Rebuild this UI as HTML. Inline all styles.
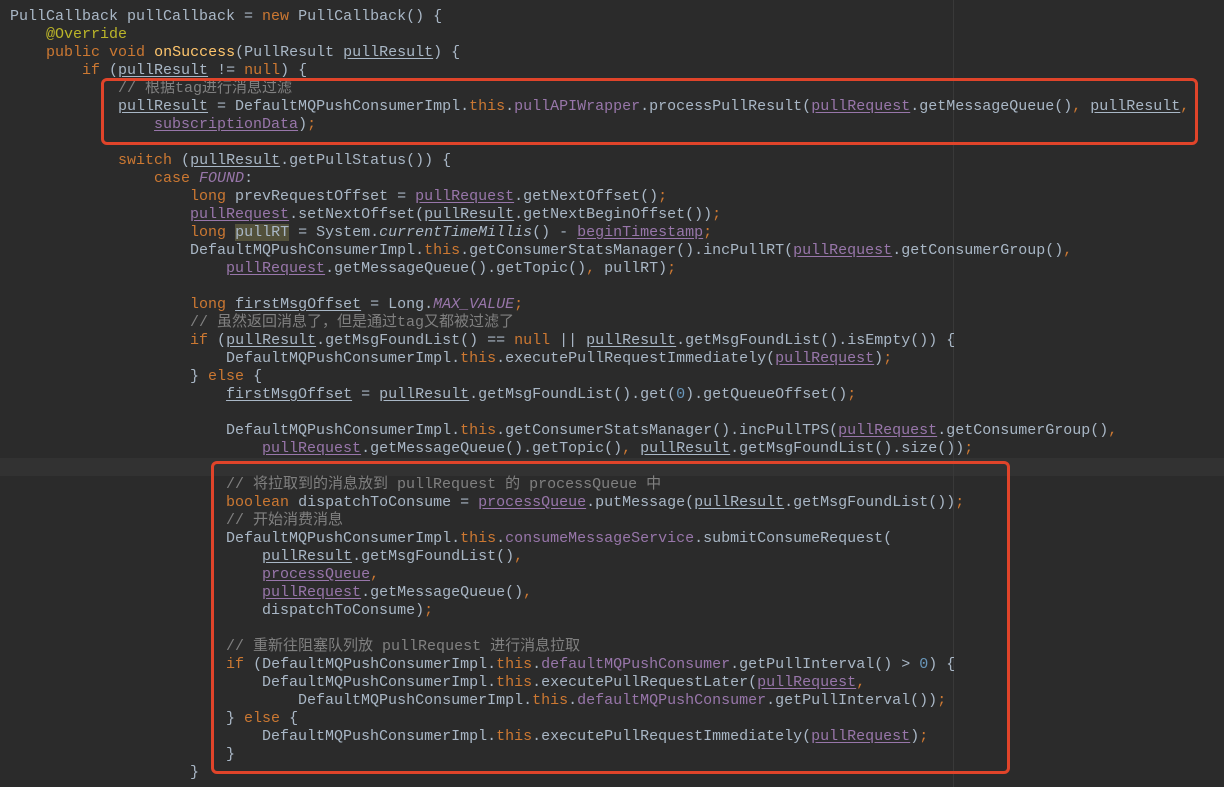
<!DOCTYPE html>
<html><head><meta charset="utf-8"><style>
html,body{margin:0;padding:0;background:#2b2b2b;width:1224px;height:787px;overflow:hidden;}
#code{position:absolute;left:10px;top:8px;font-family:"Liberation Mono","Noto Sans CJK SC",monospace;font-size:15px;color:#a9b7c6;}
.l{height:18px;line-height:18px;white-space:pre;}
.k{color:#cc7832}.f{color:#9876aa}.u{text-decoration:underline;text-underline-offset:2px}
.m{color:#ffc66d}.c{color:#808080}.i{font-style:italic}.n{color:#6897bb}.a{color:#bbb529}
.hl{background:#52503a}
.box{position:absolute;border:3px solid #e0442a;border-radius:6px;box-sizing:border-box;}
</style></head><body>
<div style="position:absolute;left:0;top:458px;width:1224px;height:18px;background:#323232"></div>
<div style="position:absolute;left:953px;top:0;width:1px;height:787px;background:#393939"></div>
<div id="code">
<div class="l">PullCallback pullCallback = <span class="k">new</span> PullCallback() {</div>
<div class="l">    <span class="a">@Override</span></div>
<div class="l">    <span class="k">public void</span> <span class="m">onSuccess</span>(PullResult <span class="u">pullResult</span>) {</div>
<div class="l">        <span class="k">if</span> (<span class="u">pullResult</span> != <span class="k">null</span>) {</div>
<div class="l">            <span class="c">// 根据tag进行消息过滤</span></div>
<div class="l">            <span class="u">pullResult</span> = DefaultMQPushConsumerImpl.<span class="k">this</span>.<span class="f">pullAPIWrapper</span>.processPullResult(<span class="f u">pullRequest</span>.getMessageQueue()<span class="k">,</span> <span class="u">pullResult</span><span class="k">,</span></div>
<div class="l">                <span class="f u">subscriptionData</span>)<span class="k">;</span></div>
<div class="l"> </div>
<div class="l">            <span class="k">switch</span> (<span class="u">pullResult</span>.getPullStatus()) {</div>
<div class="l">                <span class="k">case </span><span class="f i">FOUND</span>:</div>
<div class="l">                    <span class="k">long</span> prevRequestOffset = <span class="f u">pullRequest</span>.getNextOffset()<span class="k">;</span></div>
<div class="l">                    <span class="f u">pullRequest</span>.setNextOffset(<span class="u">pullResult</span>.getNextBeginOffset())<span class="k">;</span></div>
<div class="l">                    <span class="k">long</span> <span class="hl">pullRT</span> = System.<span class="i">currentTimeMillis</span>() - <span class="f u">beginTimestamp</span><span class="k">;</span></div>
<div class="l">                    DefaultMQPushConsumerImpl.<span class="k">this</span>.getConsumerStatsManager().incPullRT(<span class="f u">pullRequest</span>.getConsumerGroup()<span class="k">,</span></div>
<div class="l">                        <span class="f u">pullRequest</span>.getMessageQueue().getTopic()<span class="k">,</span> pullRT)<span class="k">;</span></div>
<div class="l"> </div>
<div class="l">                    <span class="k">long</span> <span class="u">firstMsgOffset</span> = Long.<span class="f i">MAX_VALUE</span><span class="k">;</span></div>
<div class="l">                    <span class="c">// 虽然返回消息了，但是通过tag又都被过滤了</span></div>
<div class="l">                    <span class="k">if</span> (<span class="u">pullResult</span>.getMsgFoundList() == <span class="k">null</span> || <span class="u">pullResult</span>.getMsgFoundList().isEmpty()) {</div>
<div class="l">                        DefaultMQPushConsumerImpl.<span class="k">this</span>.executePullRequestImmediately(<span class="f u">pullRequest</span>)<span class="k">;</span></div>
<div class="l">                    } <span class="k">else</span> {</div>
<div class="l">                        <span class="u">firstMsgOffset</span> = <span class="u">pullResult</span>.getMsgFoundList().get(<span class="n">0</span>).getQueueOffset()<span class="k">;</span></div>
<div class="l"> </div>
<div class="l">                        DefaultMQPushConsumerImpl.<span class="k">this</span>.getConsumerStatsManager().incPullTPS(<span class="f u">pullRequest</span>.getConsumerGroup()<span class="k">,</span></div>
<div class="l">                            <span class="f u">pullRequest</span>.getMessageQueue().getTopic()<span class="k">,</span> <span class="u">pullResult</span>.getMsgFoundList().size())<span class="k">;</span></div>
<div class="l"> </div>
<div class="l">                        <span class="c">// 将拉取到的消息放到 pullRequest 的 processQueue 中</span></div>
<div class="l">                        <span class="k">boolean</span> dispatchToConsume = <span class="f u">processQueue</span>.putMessage(<span class="u">pullResult</span>.getMsgFoundList())<span class="k">;</span></div>
<div class="l">                        <span class="c">// 开始消费消息</span></div>
<div class="l">                        DefaultMQPushConsumerImpl.<span class="k">this</span>.<span class="f">consumeMessageService</span>.submitConsumeRequest(</div>
<div class="l">                            <span class="u">pullResult</span>.getMsgFoundList()<span class="k">,</span></div>
<div class="l">                            <span class="f u">processQueue</span><span class="k">,</span></div>
<div class="l">                            <span class="f u">pullRequest</span>.getMessageQueue()<span class="k">,</span></div>
<div class="l">                            dispatchToConsume)<span class="k">;</span></div>
<div class="l"> </div>
<div class="l">                        <span class="c">// 重新往阻塞队列放 pullRequest 进行消息拉取</span></div>
<div class="l">                        <span class="k">if</span> (DefaultMQPushConsumerImpl.<span class="k">this</span>.<span class="f">defaultMQPushConsumer</span>.getPullInterval() &gt; <span class="n">0</span>) {</div>
<div class="l">                            DefaultMQPushConsumerImpl.<span class="k">this</span>.executePullRequestLater(<span class="f u">pullRequest</span><span class="k">,</span></div>
<div class="l">                                DefaultMQPushConsumerImpl.<span class="k">this</span>.<span class="f">defaultMQPushConsumer</span>.getPullInterval())<span class="k">;</span></div>
<div class="l">                        } <span class="k">else</span> {</div>
<div class="l">                            DefaultMQPushConsumerImpl.<span class="k">this</span>.executePullRequestImmediately(<span class="f u">pullRequest</span>)<span class="k">;</span></div>
<div class="l">                        }</div>
<div class="l">                    }</div>
</div>
<div class="box" style="left:101px;top:78px;width:1097px;height:67px"></div>
<div class="box" style="left:211px;top:461px;width:799px;height:313px"></div>
</body></html>
